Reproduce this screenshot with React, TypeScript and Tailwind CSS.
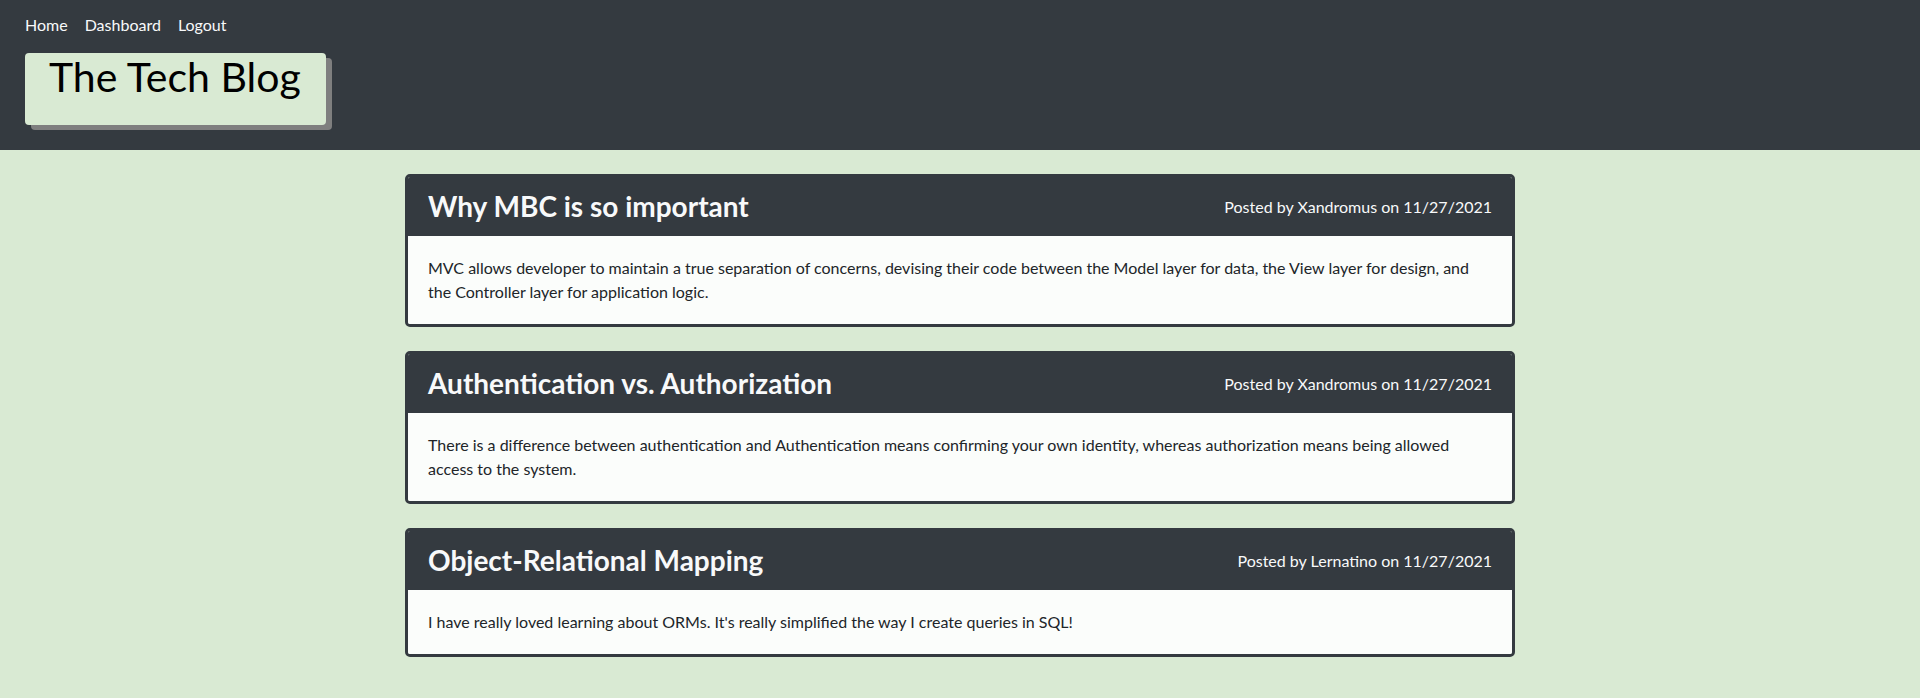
type Post = {
  id: number;
  title: string;
  author: string;
  date: string;
  body: string;
};

const posts: Post[] = [
  {
    id: 1,
    title: "Why MBC is so important",
    author: "Xandromus",
    date: "11/27/2021",
    body: "MVC allows developer to maintain a true separation of concerns, devising their code between the Model layer for data, the View layer for design, and the Controller layer for application logic.",
  },
  {
    id: 2,
    title: "Authentication vs. Authorization",
    author: "Xandromus",
    date: "11/27/2021",
    body: "There is a difference between authentication and Authentication means confirming your own identity, whereas authorization means being allowed access to the system.",
  },
  {
    id: 3,
    title: "Object-Relational Mapping",
    author: "Lernatino",
    date: "11/27/2021",
    body: "I have really loved learning about ORMs. It's really simplified the way I create queries in SQL!",
  },
];

export default function App() {
  return (
    <div className="min-h-screen bg-[#d9ead3] font-['Lato',sans-serif] text-[#212529]">
      {/* Header */}
      <header className="bg-[#343a40] px-[25px] pt-[13px] pb-[25px]">
        <nav className="flex gap-[17px] text-[16px] leading-6 text-[#f8f9fa]">
          <a href="#">Home</a>
          <a href="#">Dashboard</a>
          <a href="#">Logout</a>
        </nav>
        <div className="mt-4 w-[301px] h-[72px] bg-[#d9ead3] rounded-[4px] shadow-[6px_5px_0_#7f7f7f] pl-6">
          <h1 className="text-[41px] leading-[1.17] text-black">The Tech Blog</h1>
        </div>
      </header>

      {/* Posts */}
      <main className="w-[1110px] mx-auto pt-6 pb-10 flex flex-col gap-[24px]">
        {posts.map((post) => (
          <article key={post.id} className="border-[3px] border-[#343a40] rounded-[5px] overflow-hidden">
            <div className="h-[59px] bg-[#343a40] px-5 flex items-center justify-between">
              <h3 className="text-[28px] leading-[1.2] font-bold text-[#f8f9fa]">{post.title}</h3>
              <span className="text-[16px] leading-6 text-[#f8f9fa]">
                Posted by {post.author} on {post.date}
              </span>
            </div>
            <div className="bg-[#fbfdfb] p-5">
              <p className="text-[16px] leading-6">{post.body}</p>
            </div>
          </article>
        ))}
      </main>
    </div>
  );
}
